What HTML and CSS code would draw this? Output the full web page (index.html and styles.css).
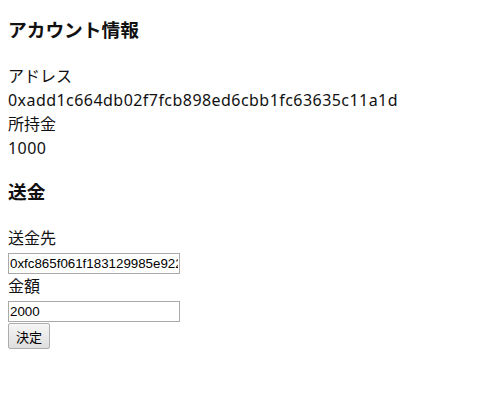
FILE: index.html
```html
<!DOCTYPE html>
<html lang="ja">
<head>
<meta charset="utf-8">
<link rel="stylesheet" href="styles.css">
</head>
<body>
<div class="page">
<h3 class="title title-first">アカウント情報</h3>
<div class="line">アドレス</div>
<div class="line latin">0xadd1c664db02f7fcb898ed6cbb1fc63635c11a1d</div>
<div class="line">所持金</div>
<div class="line latin">1000</div>
<h3 class="title">送金</h3>
<div class="line">送金先</div>
<input class="field" type="text" value="0xfc865f061f183129985e9224c0d3a6f1b0e7a2c4">
<div class="line">金額</div>
<input class="field" type="text" value="2000">
<button class="submit" type="button">決定</button>
</div>
</body>
</html>
```
FILE: styles.css
```css
body {
  margin: 0;
  font-family: "Noto Sans", "Noto Sans CJK JP", sans-serif;
  font-size: 16px;
  color: #111;
  background: #fff;
}
.page {
  display: flow-root;
  padding: 0 8px 8px;
}
.title {
  font-size: 18.72px;
  font-weight: bold;
  line-height: 27px;
  margin: 18.4px 0 21px;
}
.title-first {
  margin-top: 16px;
}
.line {
  line-height: 24px;
}
.latin {
  letter-spacing: 0.45px;
}
.field {
  display: block;
  box-sizing: border-box;
  width: 172px;
  height: 21px;
  margin-top: 3px;
  padding: 0 1px;
  border: 1px solid #a9a9a9;
  font-family: "Liberation Sans", Arial, sans-serif;
  font-size: 13.33px;
  color: #000;
  background: #fff;
}
.submit {
  display: block;
  margin-top: 1px;
  box-sizing: border-box;
  width: 42px;
  height: 26px;
  padding: 0;
  border: 1px solid #adadad;
  border-radius: 2px;
  background: linear-gradient(#f6f6f6, #dedede);
  font-family: "Noto Sans CJK JP", sans-serif;
  font-size: 13px;
  color: #000;
}
```
